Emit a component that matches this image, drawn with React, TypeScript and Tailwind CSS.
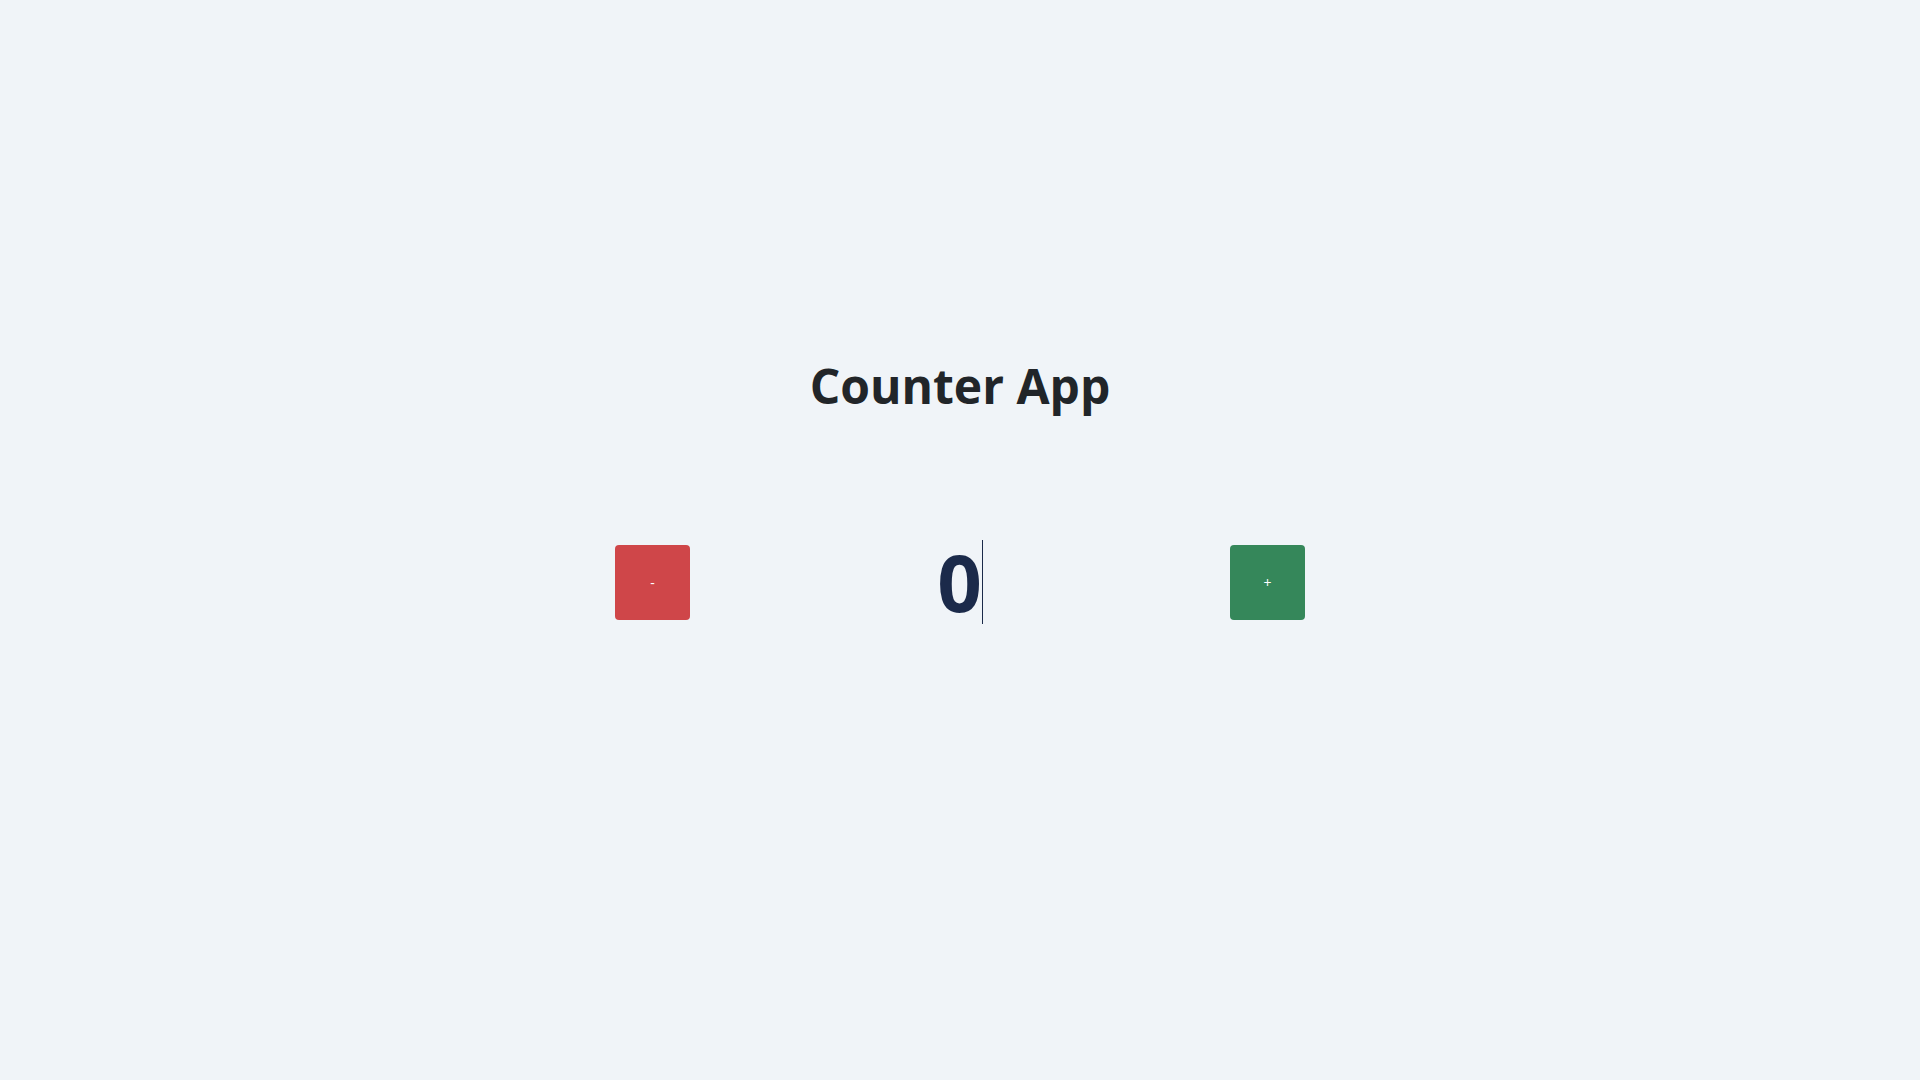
import { useState } from "react";

export default function App() {
  const [count, setCount] = useState(0);

  return (
    <div
      className="min-h-screen w-full bg-[#f0f4f8] flex flex-col items-center pt-[350px]"
      style={{ fontFamily: '"Open Sans", "Noto Sans", sans-serif' }}
    >
      <h1 className="h-[72px] flex items-center text-[48px] font-bold text-[#212529]">
        Counter App
      </h1>

      <div className="mt-[118px] w-[690px] flex items-center justify-between">
        <button
          onClick={() => setCount(count - 1)}
          className="w-[75px] h-[75px] rounded-[4px] bg-[#cf4649] text-white text-[14px] flex items-center justify-center"
        >
          -
        </button>
        <span className="h-[84px] flex items-center border-r border-[#1b2a4a] text-[78px] font-bold leading-none text-[#1b2a4a]">
          {count}
        </span>
        <button
          onClick={() => setCount(count + 1)}
          className="w-[75px] h-[75px] rounded-[4px] bg-[#35875a] text-white text-[14px] flex items-center justify-center"
        >
          +
        </button>
      </div>
    </div>
  );
}
